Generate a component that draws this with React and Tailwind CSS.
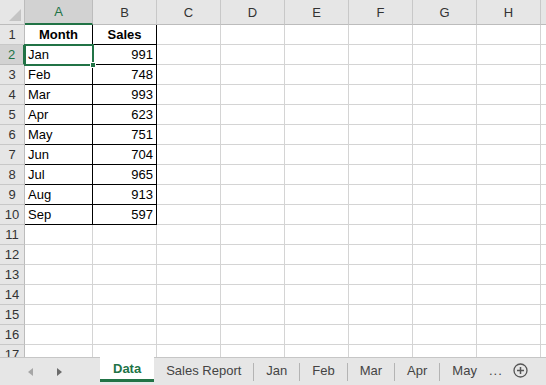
import React from 'react';

const cols = ['A', 'B', 'C', 'D', 'E', 'F', 'G', 'H', 'I'];

const data = [
  ['Jan', 991],
  ['Feb', 748],
  ['Mar', 993],
  ['Apr', 623],
  ['May', 751],
  ['Jun', 704],
  ['Jul', 965],
  ['Aug', 913],
  ['Sep', 597],
];

const tabs = ['Sales Report', 'Jan', 'Feb', 'Mar', 'Apr', 'May'];

function HeaderRow() {
  return (
    <div className="flex h-[25px] shrink-0">
      {/* corner with the little select-all triangle */}
      <div className="relative w-[25px] shrink-0 bg-[#e6e6e6] border-r border-b border-[#bcbcbc]">
        <div className="absolute right-[3px] bottom-[3px] w-0 h-0 border-l-[12px] border-l-transparent border-b-[12px] border-b-[#c4c4c4]" />
      </div>
      {cols.map((c) => {
        const active = c === 'A';
        const w = c === 'A' ? 'w-[68px]' : 'w-[64px]';
        return (
          <div
            key={c}
            className={`${w} shrink-0 flex items-center justify-center border-r ${
              active
                ? 'bg-[#d2d2d2] text-[#217346] border-r-[#bcbcbc] border-b-2 border-b-[#217346]'
                : 'bg-[#e6e6e6] text-[#333] border-r-[#c8c8c8] border-b border-b-[#bcbcbc]'
            }`}
          >
            {c === 'I' ? '' : c}
          </div>
        );
      })}
    </div>
  );
}

function Row({ n, cells }) {
  const active = n === 2;
  return (
    <div className="flex h-[20px] shrink-0">
      <div
        className={`w-[25px] shrink-0 flex items-center justify-center border-b ${
          active
            ? 'bg-[#d2d2d2] text-[#217346] border-b-[#bcbcbc] border-r-2 border-r-[#217346]'
            : 'bg-[#e6e6e6] text-[#333] border-b-[#c8c8c8] border-r border-r-[#bcbcbc]'
        }`}
      >
        {n}
      </div>
      {cols.map((c, i) => {
        const inTable = n <= 10 && i < 2;
        const w = c === 'A' ? 'w-[68px]' : 'w-[64px]';
        const value = cells ? cells[i] : null;
        const cls = inTable ? 'border-r border-b border-black' : 'border-r border-b border-[#d4d4d4]';
        const align =
          n === 1
            ? 'justify-center font-bold text-black'
            : i === 1
            ? 'justify-end pr-[3px] text-black'
            : 'justify-start pl-[3px] text-black';
        return (
          <div key={c} className={`${w} shrink-0 flex items-center ${align} ${cls}`}>
            {value}
          </div>
        );
      })}
    </div>
  );
}

function Grid() {
  const rows = [];
  rows.push(<Row key={1} n={1} cells={['Month', 'Sales']} />);
  data.forEach((d, i) => rows.push(<Row key={i + 2} n={i + 2} cells={d} />));
  for (let n = 11; n <= 17; n++) rows.push(<Row key={n} n={n} />);
  return (
    <div className="relative h-[357px] overflow-hidden bg-white flex flex-col">
      <HeaderRow />
      {rows}
      {/* active cell A2 */}
      <div className="absolute left-[24px] top-[44px] w-[70px] h-[22px] border-2 border-[#217346]">
        <div className="absolute -right-[4px] -bottom-[4px] w-[6px] h-[6px] bg-[#217346] border border-white" />
      </div>
    </div>
  );
}

function TabBar() {
  return (
    <div className="h-[28px] flex items-start bg-[#e6e6e6] border-t border-[#c6c6c6] text-[13px] text-[#444]">
      <div className="w-[100px] h-full flex items-center shrink-0">
        <span className="ml-[28px] w-0 h-0 border-y-[4px] border-y-transparent border-r-[5px] border-r-[#a6a6a6]" />
        <span className="ml-[24px] w-0 h-0 border-y-[4px] border-y-transparent border-l-[5px] border-l-[#6b6b6b]" />
      </div>
      <div className="h-[25px] -mt-px px-[13px] flex items-center bg-white font-bold text-[#217346] border-b-[3px] border-[#217346]">
        Data
      </div>
      {tabs.map((t, i) => (
        <div key={t} className="flex items-center h-full">
          {i > 0 && <span className="w-px h-[18px] bg-[#b4b4b4]" />}
          <div className="px-[12px] h-full flex items-center pb-[2px]">{t}</div>
        </div>
      ))}
      <div className="h-full flex items-center pb-[2px] tracking-[1px]">...</div>
      <div className="h-full flex items-center pb-[2px] ml-[10px]">
        <svg width="15" height="15" viewBox="0 0 15 15">
          <circle cx="7.5" cy="7.5" r="6.5" fill="none" stroke="#555" strokeWidth="1.3" />
          <path d="M7.5 4v7M4 7.5h7" stroke="#555" strokeWidth="1.5" />
        </svg>
      </div>
    </div>
  );
}

export default function App() {
  return (
    <div
      className="w-[546px] h-[385px] overflow-hidden bg-white text-[13px] leading-none"
      style={{ fontFamily: '"Liberation Sans", Arial, sans-serif' }}
    >
      <Grid />
      <TabBar />
    </div>
  );
}
